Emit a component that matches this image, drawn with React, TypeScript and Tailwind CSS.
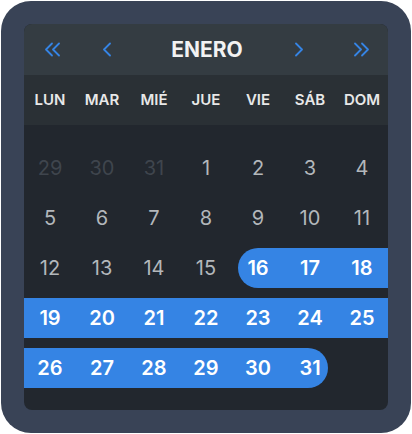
const WEEKDAYS = ["LUN", "MAR", "MIÉ", "JUE", "VIE", "SÁB", "DOM"];

type Day = { n: number; muted?: boolean; sel?: boolean; start?: boolean; end?: boolean };

const rows: Day[][] = [
  [{ n: 29, muted: true }, { n: 30, muted: true }, { n: 31, muted: true }, { n: 1 }, { n: 2 }, { n: 3 }, { n: 4 }],
  [{ n: 5 }, { n: 6 }, { n: 7 }, { n: 8 }, { n: 9 }, { n: 10 }, { n: 11 }],
  [{ n: 12 }, { n: 13 }, { n: 14 }, { n: 15 }, { n: 16, sel: true, start: true }, { n: 17, sel: true }, { n: 18, sel: true }],
  [19, 20, 21, 22, 23, 24, 25].map((n) => ({ n, sel: true })),
  [{ n: 26, sel: true }, { n: 27, sel: true }, { n: 28, sel: true }, { n: 29, sel: true }, { n: 30, sel: true }, { n: 31, sel: true, end: true }, { n: 0 }],
];

function Chevron({ double, right }: { double?: boolean; right?: boolean }) {
  return (
    <svg
      width={double ? 16 : 9}
      height={15}
      viewBox={double ? "0 0 16 15" : "0 0 9 15"}
      fill="none"
      stroke="#3584e4"
      strokeWidth={1.8}
      strokeLinecap="round"
      strokeLinejoin="round"
      className={right ? "rotate-180" : ""}
    >
      <path d="M8 1.5 L2 7.5 L8 13.5" />
      {double && <path d="M15 1.5 L9 7.5 L15 13.5" />}
    </svg>
  );
}

function Cell({ d }: { d: Day }) {
  if (!d.n) return <div className="h-[50px]" />;
  if (d.sel) {
    const cls = d.start
      ? "ml-[6px] pr-[6px] rounded-l-full"
      : d.end
        ? "mr-[8px] pl-[8px] rounded-r-full"
        : "";
    return (
      <div className="flex h-[50px] items-center">
        <div className={`flex h-10 flex-1 items-center justify-center bg-[#3584e4] text-[20px] font-semibold text-white ${cls}`}>
          {d.n}
        </div>
      </div>
    );
  }
  return (
    <div
      className={`flex h-[50px] items-center justify-center text-[20px] ${
        d.muted ? "text-[#3f454d]" : "text-[#b3b7bb]"
      }`}
    >
      {d.n}
    </div>
  );
}

export default function App() {
  return (
    <div className="h-[434px] w-[412px] bg-white p-px" style={{ fontFamily: "Inter, 'Noto Sans', sans-serif" }}>
      <div className="h-[432px] w-[410px] rounded-[30px] bg-[#394356] p-[23px]">
        <div className="flex h-full flex-col overflow-hidden rounded-lg bg-[#22272e]">
          <div className="flex h-[51px] items-center bg-[#343c42] pl-[20px]">
            <Chevron double />
            <div className="ml-[42px]">
              <Chevron />
            </div>
            <div className="w-[184px] pl-[8px] text-center text-[21px] font-bold text-[#f2f2f2]">ENERO</div>
            <Chevron right />
            <div className="ml-[50px]">
              <Chevron double right />
            </div>
          </div>
          <div className="grid h-[50px] grid-cols-7 items-center bg-[#2a3035]">
            {WEEKDAYS.map((w) => (
              <div key={w} className="text-center text-[15px] font-semibold text-[#e8e8e8]">
                {w}
              </div>
            ))}
          </div>
          <div className="pt-[18px]">
            {rows.map((r, i) => (
              <div key={i} className="grid grid-cols-7">
                {r.map((d, j) => (
                  <Cell key={j} d={d} />
                ))}
              </div>
            ))}
          </div>
        </div>
      </div>
    </div>
  );
}
